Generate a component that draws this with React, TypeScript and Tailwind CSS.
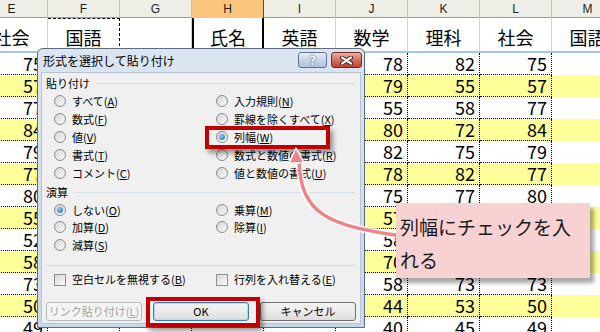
import React from "react";

const cols = ["E", "F", "G", "H", "I", "J", "K", "L", "M"];
const heads = ["社会", "国語", "", "氏名", "英語", "数学", "理科", "社会", "国語"];

// J・K・L列の点数(E列はL列と同じ)
const scores = [
  [78, 82, 75],
  [79, 55, 57],
  [55, 58, 77],
  [80, 72, 84],
  [82, 75, 79],
  [78, 82, 77],
  [75, 77, 80],
  [57, 60, 55],
  [58, 66, 52],
  [70, 71, 58],
  [58, 73, 73],
  [44, 53, 50],
  [40, 45, 49],
];

function Radio({ on = false }: { on?: boolean }) {
  return (
    <span className="flex h-[12px] w-[12px] shrink-0 items-center justify-center rounded-full border border-[#8c8c8c] bg-linear-to-br from-[#d4d4d4] to-[#fbfbfb]">
      {on && (
        <span className="h-[6px] w-[6px] rounded-full bg-[radial-gradient(circle_at_35%_35%,#8fd0ff,#1a5eaa)]" />
      )}
    </span>
  );
}

function Check() {
  return (
    <span className="h-[12px] w-[12px] shrink-0 border border-[#8f8f8f] bg-linear-to-br from-[#d8d8d8] to-[#fbfbfb]" />
  );
}

function Key({ label, k }: { label: string; k: string }) {
  return (
    <span className="whitespace-nowrap">
      {label}(<span className="underline underline-offset-[1px]">{k}</span>)
    </span>
  );
}

function Opt({ label, k, on }: { label: string; k: string; on?: boolean }) {
  return (
    <div className="flex items-center gap-[6px]">
      <Radio on={on} />
      <Key label={label} k={k} />
    </div>
  );
}

function Group({ title }: { title: string }) {
  return (
    <div className="flex h-[17px] items-center pl-[4px] pr-[5px]">
      <span>{title}</span>
      <div className="ml-[6px] flex-1 border-t border-[#d5dfe5]" />
    </div>
  );
}

function PasteDialog() {
  return (
    <div className="absolute left-[37px] top-[48px] flex h-[280px] w-[328px] flex-col rounded-t-[6px] border border-[#5d6b7d] bg-linear-to-b from-[#dbe5f1] to-[#c8d7e9] px-[4px] pb-[4px] text-[11px] text-black">
      {/* タイトルバー */}
      <div className="flex h-[24px] justify-between">
        <span className="self-center pl-[1px] text-[12px] leading-none">形式を選択して貼り付け</span>
        <div className="mr-[-2px] flex gap-[4px] pt-[3px]">
          <div className="flex h-[16px] w-[29px] items-center justify-center rounded-[3px] border border-[#5f7390] bg-linear-to-b from-[#e6edf6] via-[#c6d5e7] to-[#aec2db] text-[12px] font-bold leading-none text-white [text-shadow:0_0_2px_#2b3a4d]">
            ?
          </div>
          <div className="flex h-[16px] w-[31px] items-center justify-center rounded-[3px] border border-[#7a2a20] bg-linear-to-b from-[#eab0a5] via-[#d4715f] to-[#c13f2b]">
            <svg width="13" height="9" viewBox="0 0 13 9">
              <path d="M2 1.5 L11 7.5 M11 1.5 L2 7.5" stroke="#3b1410" strokeWidth="4" strokeLinecap="round" />
              <path d="M2 1.5 L11 7.5 M11 1.5 L2 7.5" stroke="#ffffff" strokeWidth="2.2" strokeLinecap="round" />
            </svg>
          </div>
        </div>
      </div>

      {/* 本体 */}
      <div className="flex flex-1 flex-col bg-[#f0f0f0] pt-[2px] shadow-[0_0_0_1px_#b7c4d3]">
        <Group title="貼り付け" />
        <div className="grid grid-cols-[162px_1fr] auto-rows-[18px] pl-[12px]">
          <Opt label="すべて" k="A" />
          <Opt label="入力規則" k="N" />
          <Opt label="数式" k="F" />
          <Opt label="罫線を除くすべて" k="X" />
          <Opt label="値" k="V" />
          <Opt label="列幅" k="W" on />
          <Opt label="書式" k="T" />
          <Opt label="数式と数値の書式" k="R" />
          <Opt label="コメント" k="C" />
          <Opt label="値と数値の書式" k="U" />
        </div>

        <div className="mt-[2px]">
          <Group title="演算" />
        </div>
        <div className="grid grid-cols-[162px_1fr] auto-rows-[17.5px] pl-[12px]">
          <Opt label="しない" k="O" on />
          <Opt label="乗算" k="M" />
          <Opt label="加算" k="D" />
          <Opt label="除算" k="I" />
          <Opt label="減算" k="S" />
        </div>

        <div className="mx-[4px] mt-[11px] border-t border-[#d5dfe5]" />

        <div className="mt-[5px] grid h-[18px] grid-cols-[162px_1fr] pl-[12px]">
          <div className="flex items-center gap-[6px]">
            <Check />
            <Key label="空白セルを無視する" k="B" />
          </div>
          <div className="flex items-center gap-[6px]">
            <Check />
            <Key label="行列を入れ替える" k="E" />
          </div>
        </div>

        <div className="mt-[13px] flex gap-[11px] px-[4px]">
          <div className="flex h-[19px] w-[96px] items-center justify-center rounded-[3px] border border-[#b5b9bc] bg-[#f4f4f4] text-[#a3a3a3]">
            <Key label="リンク貼り付け" k="L" />
          </div>
          <div className="flex h-[19px] w-[96px] items-center justify-center rounded-[3px] border border-[#3c7fb1] bg-linear-to-b from-[#f4f4f4] via-[#ebebeb] to-[#dcdcdc] shadow-[inset_0_0_0_1px_#a8dcf7]">
            OK
          </div>
          <div className="flex h-[19px] w-[96px] items-center justify-center rounded-[3px] border border-[#707070] bg-linear-to-b from-[#f4f4f4] via-[#ebebeb] to-[#dcdcdc]">
            キャンセル
          </div>
        </div>
      </div>
    </div>
  );
}

export default function App() {
  return (
    <div className="relative h-[332px] w-[600px] overflow-hidden bg-white font-['Noto_Sans_CJK_JP',sans-serif] text-black">
      {/* シート */}
      <div className="ml-[-24px] flex w-[648px] flex-col">
        <div className="grid h-[18px] grid-cols-[repeat(9,72px)] border-b border-[#9e9d8f] bg-[#efeee6] font-['Liberation_Sans',sans-serif] text-[12px] text-[#1e1e1e]">
          {cols.map((c) => (
            <div
              key={c}
              className={`flex items-center justify-center border-r ${c === "H" ? "border-[#3a4a8c] bg-[#f9c67d]" : "border-[#c3c2b6]"}`}
            >
              {c}
            </div>
          ))}
        </div>

        <div className="grid h-[35px] grid-cols-[repeat(9,72px)] border-b-2 border-[#a3c6ee] text-[18px] leading-[22px]">
          {heads.map((h, i) => (
            <div
              key={i}
              className={
                i === 3
                  ? "flex items-end justify-center border-x-2 border-black pb-[3px]"
                  : i === 1
                    ? "flex items-end justify-center border-t border-r border-dashed border-black pb-[3px]"
                    : "flex items-end justify-center border-r border-[#d4d4d4] pb-[3px]"
              }
            >
              {h}
            </div>
          ))}
        </div>

        {scores.map((s, r) => {
          const vals = [s[2], null, null, null, null, s[0], s[1], s[2], null];
          return (
            <div
              key={r}
              className={`grid h-[22px] grid-cols-[repeat(9,72px)] ${r % 2 ? "bg-[#ffff99]" : "bg-white"}`}
            >
              {vals.map((v, c) => (
                <div
                  key={c}
                  className={
                    c < 8
                      ? "border-r border-b border-dotted border-black pr-[4px] text-right text-[18px] leading-[21px]"
                      : ""
                  }
                >
                  {v}
                </div>
              ))}
            </div>
          );
        })}
      </div>

      <PasteDialog />

      {/* 赤枠 */}
      <div className="absolute left-[205px] top-[126px] h-[23px] w-[125px] border-[4px] border-[#c00000] shadow-[3px_4px_5px_rgba(0,0,0,0.4)]" />
      <div className="absolute left-[146px] top-[297px] h-[30px] w-[114px] border-[4px] border-[#c00000] shadow-[3px_4px_5px_rgba(0,0,0,0.4)]" />

      {/* 矢印 */}
      <svg className="pointer-events-none absolute left-0 top-0" width="600" height="332" viewBox="0 0 600 332">
        <path d="M299 160 C300 215 330 226 402 236" fill="none" stroke="#ffffff" strokeOpacity="0.85" strokeWidth="7" strokeLinecap="round" />
        <path d="M299 160 C300 215 330 226 402 236" fill="none" stroke="#ee8489" strokeWidth="3.5" strokeLinecap="round" />
        <polygon points="296,148 289,163 304,163" fill="#ee8489" stroke="#ffffff" strokeWidth="1.5" strokeLinejoin="round" />
      </svg>

      {/* 吹き出し */}
      <div className="absolute left-[396px] top-[203px] h-[75px] w-[194px] bg-[#f8d1d2] px-[4px] pt-[7px] text-[19px] leading-[33px] text-[#1a1a1a] shadow-[4px_5px_4px_rgba(0,0,0,0.35)]">
        列幅にチェックを入
        <br />
        れる
      </div>
    </div>
  );
}
